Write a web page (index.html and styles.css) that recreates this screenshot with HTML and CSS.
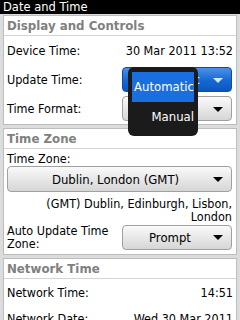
FILE: index.html
```html
<!DOCTYPE html>
<html>
<head>
<meta charset="utf-8">
<link rel="stylesheet" href="styles.css">
</head>
<body>
<div class="titlebar">Date and Time</div>
<div class="content">
  <section class="panel p1">
    <div class="phead">Display and Controls</div>
    <div class="row"><span class="lbl">Device Time:</span><span class="val">30 Mar 2011 13:52</span></div>
    <div class="row"><span class="lbl">Update Time:</span>
      <div class="btn blue"><span class="btxt">Automatic</span><span class="arrow white"></span>
        <div class="menu">
          <div class="mi sel">Automatic</div>
          <div class="mi">Manual</div>
        </div>
      </div>
    </div>
    <div class="row"><span class="lbl">Time Format:</span>
      <div class="btn"><span class="btxt hidden">24 hour</span><span class="arrow"></span></div>
    </div>
  </section>
  <section class="panel p2">
    <div class="phead">Time Zone</div>
    <div class="lbl single">Time Zone:</div>
    <div class="btn wide"><span class="btxt">Dublin, London (GMT)</span><span class="arrow"></span></div>
    <div class="tzdesc">(GMT) Dublin, Edinburgh, Lisbon, London</div>
    <div class="row two"><span class="lbl">Auto Update Time Zone:</span>
      <div class="btn"><span class="btxt">Prompt</span><span class="arrow"></span></div>
    </div>
  </section>
  <section class="panel p3">
    <div class="phead">Network Time</div>
    <div class="row"><span class="lbl">Network Time:</span><span class="val">14:51</span></div>
    <div class="row"><span class="lbl">Network Date:</span><span class="val">Wed 30 Mar 2011</span></div>
  </section>
</div>
</body>
</html>
```
FILE: styles.css
```css
html, body { margin: 0; padding: 0; }
body {
  width: 240px; height: 320px; overflow: hidden;
  background: #dcdcdc;
  font-family: "DejaVu Sans Condensed", "DejaVu Sans", sans-serif;
  color: #000;
}
.titlebar {
  background: #000; color: #fff;
  font-family: "DejaVu Sans", sans-serif;
  font-size: 11.5px; height: 14px; line-height: 14px;
  padding-left: 3px;
}
.content { padding: 1px 3px 0 3px; display: flex; flex-direction: column; gap: 3px; }
.panel {
  background: #fff;
  border: 1px solid #bdbdbd;
  padding: 0 4px 1px 3px;
  position: relative;
}
.p2 { padding-bottom: 4px; }
.phead {
  font-family: "DejaVu Sans", sans-serif;
  font-size: 11.8px; font-weight: bold; color: #808080;
  height: 19px; line-height: 20px;
  border-bottom: 1px solid #d4d4d4;
  margin: 0 -4px 0 -3px; padding-left: 3px;
}
.row {
  display: flex; align-items: center; justify-content: space-between;
  height: 29px;
  font-size: 12.5px;
}
.p3 .row { height: 26px; }
.p3 .row:first-of-type { margin-top: 1px; }
.lbl, .val { font-size: 12.5px; }
.val { margin-right: -1px; }
.single { height: 17px; line-height: 19px; }
.btn {
  position: relative;
  width: 110px; height: 25px;
  box-sizing: border-box;
  border: 1px solid #a0a0a0;
  border-radius: 4px;
  background: linear-gradient(#fafafa, #e6e6e6 55%, #d6d6d6);
  display: flex; align-items: center; justify-content: center;
  font-size: 13px;
}
.btn .btxt { margin-right: 14px; }
.hidden { visibility: hidden; }
.btn.blue {
  background: linear-gradient(#4b92e8, #1767d2 55%, #0b57c2);
  border-color: #0c4ba8; color: #fff;
}
.btn.wide { width: 225px; height: 26px; margin-top: 0; }
.btn.wide .btxt { margin-right: 8px; }
.arrow {
  position: absolute; right: 8px; top: 50%; margin-top: -2px;
  width: 0; height: 0;
  border-left: 5px solid transparent; border-right: 5px solid transparent;
  border-top: 5px solid #000;
}
.arrow.white { border-top-color: #d4e5ff; }
.tzdesc {
  text-align: right; font-size: 12.5px; line-height: 13px;
  padding: 5px 0 0 0;
}
.row.two { height: 26px; margin-top: 1px; }
.row.two .lbl { width: 112px; line-height: 13px; }
.menu {
  position: absolute; left: 5px; top: -1px;
  width: 70px; height: 69px;
  background: #1b1b1b;
  border-radius: 6px;
  box-sizing: border-box;
  padding: 5px 4px;
  z-index: 5;
}
.mi {
  height: 30px; line-height: 30px; text-align: right;
  color: #fff; font-size: 13px;
}
.mi.sel { background: #1a6fe0; }
.mi:last-child { height: 28px; }
```
